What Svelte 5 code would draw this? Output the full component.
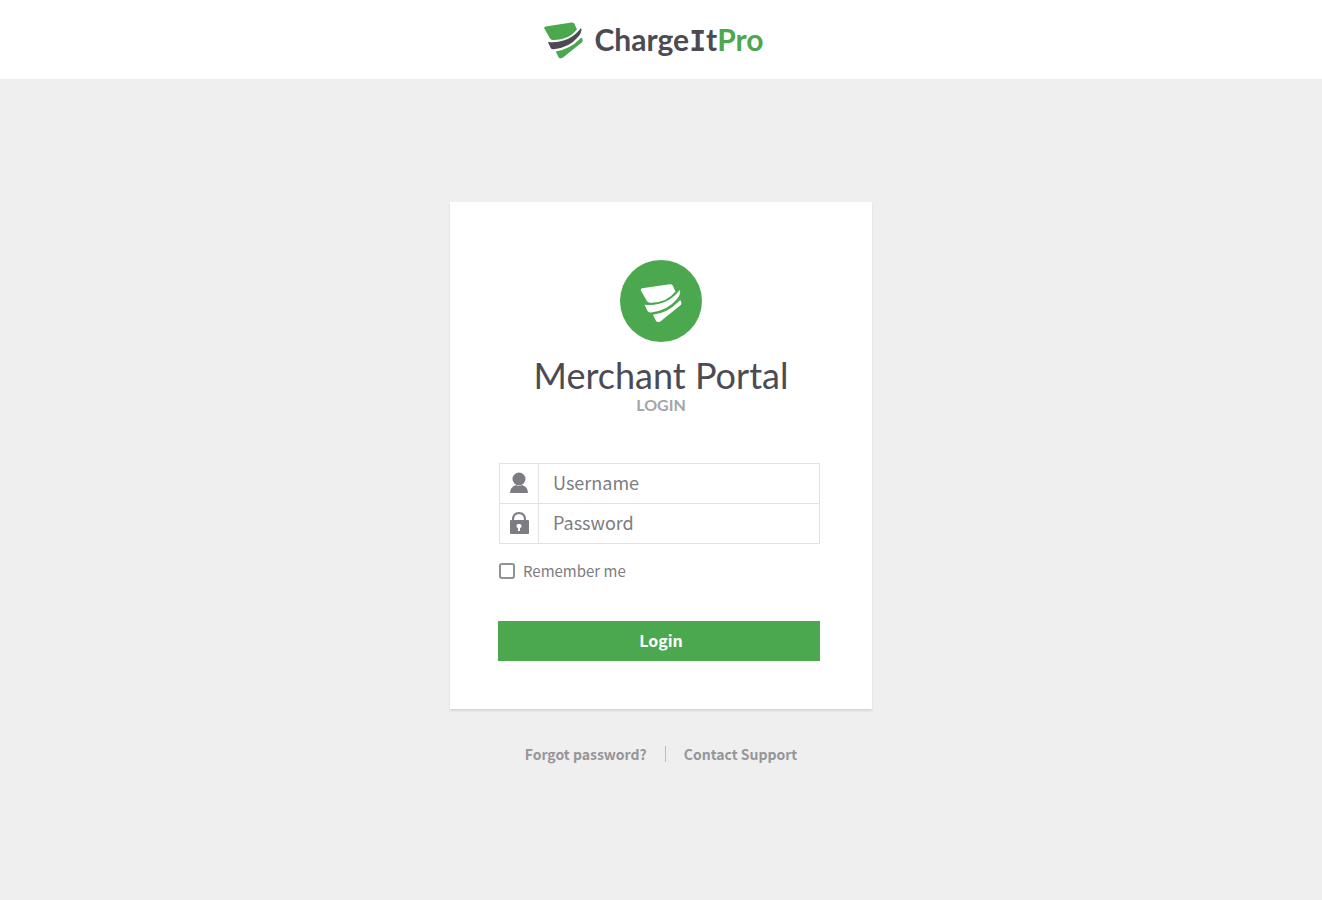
<script>
	let username = $state('');
	let password = $state('');
	let remember = $state(false);

	function handleSubmit(e) {
		e.preventDefault();
	}
</script>

{#snippet mark()}
	<path
		class="mark-top"
		d="M66 84 L148 72 Q154 71 157 76 L165 94 Q138 129 89 127 Q83 127 80 122 L62 91 Q60 85 66 84Z"
	/>
	<path
		class="mark-middle"
		d="M73 133 Q137 139 174 94 Q178 87 179 92 Q180 103 169 117 Q140 152 92 156 Q85 157 82 152Z"
	/>
	<path
		class="mark-bottom"
		d="M98 163 Q142 157 174 124 Q179 117 181 121 L183 129 Q183 132 180 135 L121 182 Q111 188 107 181Z"
	/>
{/snippet}

<header class="site-header">
	<a class="brand" href="/">
		<svg class="brand-mark" viewBox="61 71 123 115" aria-hidden="true">
			{@render mark()}
		</svg>
		<span class="brand-name">Charge<span class="slab">I</span>t<span class="pro">Pro</span></span>
	</a>
</header>

<main>
	<section class="card">
		<svg class="badge" viewBox="0 0 244 244" aria-hidden="true">
			<circle cx="122" cy="122" r="122" />
			{@render mark()}
		</svg>
		<h1>Merchant Portal</h1>
		<h2>LOGIN</h2>

		<form onsubmit={handleSubmit}>
			<div class="fields">
				<div class="field">
					<label for="username" aria-label="Username">
						<svg viewBox="0 0 20 24" aria-hidden="true">
							<circle cx="10" cy="8" r="6.5" />
							<path d="M1 22 Q1 16 7 14 Q10 16 13 14 Q19 16 19 22Z" />
						</svg>
					</label>
					<input id="username" type="text" placeholder="Username" bind:value={username} />
				</div>
				<div class="field">
					<label for="password" aria-label="Password">
						<svg viewBox="0 0 20 24" aria-hidden="true">
							<path class="shackle" d="M4 10 V9 Q4 2 10 2 Q16 2 16 9 V10" />
							<rect x="1" y="9" width="19" height="14" rx="1" />
							<path class="keyhole" d="M10 13 a2 2 0 0 1 1 4 v3 h-2 v-3 a2 2 0 0 1 1 -4Z" />
						</svg>
					</label>
					<input id="password" type="password" placeholder="Password" bind:value={password} />
				</div>
			</div>

			<label class="remember">
				<input type="checkbox" bind:checked={remember} />
				Remember me
			</label>

			<button type="submit">Login</button>
		</form>
	</section>

	<nav class="links">
		<a href="/forgot">Forgot password?</a>
		<span class="divider"></span>
		<a href="/support">Contact Support</a>
	</nav>
</main>

<style>
	:global(body) {
		margin: 0;
		background: #efefef;
		color: #4c4b54;
		font-family: 'Noto Sans CJK SC', 'Noto Sans', sans-serif;
	}

	.site-header {
		box-sizing: border-box;
		display: flex;
		justify-content: center;
		height: 79px;
		padding: 2px 15px 0 0;
		background: #fff;
	}

	.brand {
		display: flex;
		align-items: center;
		gap: 12px;
		color: #4c4b54;
		text-decoration: none;
	}

	.brand-mark {
		width: 39px;
		height: 37px;
		fill: #4ba84f;
	}

	.brand-mark .mark-middle {
		fill: #4c4b54;
	}

	.brand-name {
		font: 700 30px/40px Lato, sans-serif;
	}

	.slab {
		font-family: 'DejaVu Sans Mono', monospace;
		font-size: 28px;
	}

	.pro {
		color: #4ba84f;
	}

	main {
		display: flex;
		flex-direction: column;
		align-items: center;
		padding: 123px 16px 48px;
	}

	.card {
		box-sizing: border-box;
		display: flex;
		flex-direction: column;
		align-items: center;
		width: 100%;
		max-width: 422px;
		padding: 58px 48px 48px;
		background: #fff;
		box-shadow: 0 2px 2px #d6d6d6;
	}

	.badge {
		width: 82px;
		height: 82px;
		fill: #fff;
	}

	.badge circle {
		fill: #4ba84f;
	}

	h1 {
		margin: 13px 0 0;
		font: 400 36px/40px Lato, sans-serif;
	}

	h2 {
		margin: 0;
		color: #a5a5a8;
		font: 700 16px/20px Lato, sans-serif;
	}

	form {
		box-sizing: border-box;
		width: 100%;
		padding-right: 4px;
		margin-top: 48px;
	}

	.fields {
		margin-left: 1px;
		border: 1px solid #e2e2e2;
	}

	.field {
		display: flex;
		height: 39px;
	}

	.field + .field {
		border-top: 1px solid #e2e2e2;
	}

	.field label {
		box-sizing: border-box;
		display: flex;
		align-items: center;
		justify-content: center;
		width: 39px;
		padding-bottom: 1px;
		border-right: 1px solid #e2e2e2;
	}

	.field svg {
		width: 20px;
		height: 24px;
		fill: #7d7c82;
	}

	.field .shackle {
		fill: none;
		stroke: #7d7c82;
		stroke-width: 2;
	}

	.field .keyhole {
		fill: #fff;
	}

	.field input {
		flex: 1;
		min-width: 0;
		padding: 0 14px 3px;
		border: 0;
		background: none;
		color: #4c4b54;
		font: inherit;
		font-size: 18px;
	}

	.field input::placeholder {
		color: #7d7c82;
		opacity: 1;
	}

	.remember {
		display: flex;
		align-items: center;
		gap: 8px;
		margin: 15px 0 0 1px;
		color: #7d7c82;
		font-size: 15px;
		line-height: 24px;
	}

	.remember input {
		appearance: none;
		box-sizing: border-box;
		width: 16px;
		height: 16px;
		margin: 0;
		border: 2px solid #929196;
		border-radius: 3px;
		background: #fff;
	}

	.remember input:checked {
		background: #4ba84f;
	}

	button {
		width: 100%;
		height: 40px;
		padding: 0 0 2px 4px;
		margin-top: 38px;
		border: 0;
		background: #4ba84f;
		color: #fff;
		font: inherit;
		font-size: 16px;
		font-weight: 700;
		cursor: pointer;
	}

	.links {
		display: flex;
		align-items: center;
		gap: 18px;
		margin-top: 33px;
		font-size: 14px;
		font-weight: 700;
		line-height: 24px;
	}

	.links a {
		color: #96969a;
		text-decoration: none;
	}

	.divider {
		width: 1px;
		height: 16px;
		background: #bdbdbf;
	}
</style>
